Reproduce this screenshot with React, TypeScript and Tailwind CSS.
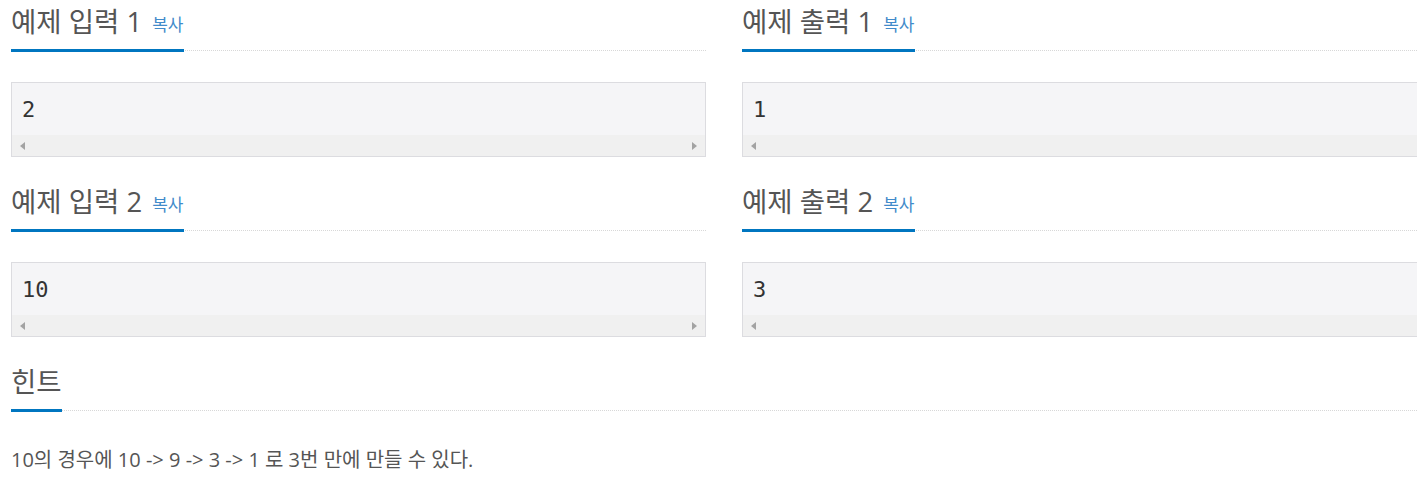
import React from "react";

const sans = { fontFamily: '"Open Sans", "Noto Sans CJK KR", sans-serif' };

function Headline({ title, copy }: { title: string; copy?: boolean }) {
  return (
    <div className="flex items-start border-b border-dotted border-[#d8d8d8]">
      <h2
        className="mb-[-2px] inline-block border-b-[3px] border-[#0076c0] pt-[8px] pb-[13px] text-[27.5px] leading-[28px] font-normal text-[#555] whitespace-nowrap"
        style={sans}
      >
        {title}
        {copy && (
          <span className="ml-[10px] align-[1px] text-[17px] leading-[16px] text-[#428bca]">복사</span>
        )}
      </h2>
    </div>
  );
}

function SampleBox({ value }: { value: string }) {
  return (
    <div className="mt-[31px] border border-[#dcdce0] bg-[#f5f5f7]">
      <pre
        className="m-0 pt-[12px] pb-[10px] pl-[10px] text-[22px] leading-[30px] text-[#333]"
        style={{ fontFamily: '"DejaVu Sans Mono", monospace' }}
      >
        {value}
      </pre>
      <div className="flex h-[21px] items-center justify-between bg-[#f0f0f0] px-[8px]">
        <svg width="5" height="8" viewBox="0 0 5 8">
          <polygon points="5,0 0,4 5,8" fill="#a3a3a3" />
        </svg>
        <svg width="5" height="8" viewBox="0 0 5 8">
          <polygon points="0,0 5,4 0,8" fill="#a3a3a3" />
        </svg>
      </div>
    </div>
  );
}

function Sample({ title, value }: { title: string; value: string }) {
  return (
    <div className="mb-[23px]">
      <Headline title={title} copy />
      <SampleBox value={value} />
    </div>
  );
}

export default function App() {
  return (
    <div className="w-[1417px] h-[481px] overflow-hidden bg-white">
      <div className="w-[1437px] pl-[11px]">
        <div className="grid grid-cols-[695px_695px] gap-x-[36px]">
          <Sample title="예제 입력 1" value="2" />
          <Sample title="예제 출력 1" value="1" />
          <Sample title="예제 입력 2" value="10" />
          <Sample title="예제 출력 2" value="3" />
        </div>
        <div>
          <Headline title="힌트" />
          <p
            className="m-0 mt-[34px] text-[20px] leading-[30px] text-[#555]"
            style={sans}
          >
            10의 경우에 10 -&gt; 9 -&gt; 3 -&gt; 1 로 3번 만에 만들 수 있다.
          </p>
        </div>
      </div>
    </div>
  );
}
